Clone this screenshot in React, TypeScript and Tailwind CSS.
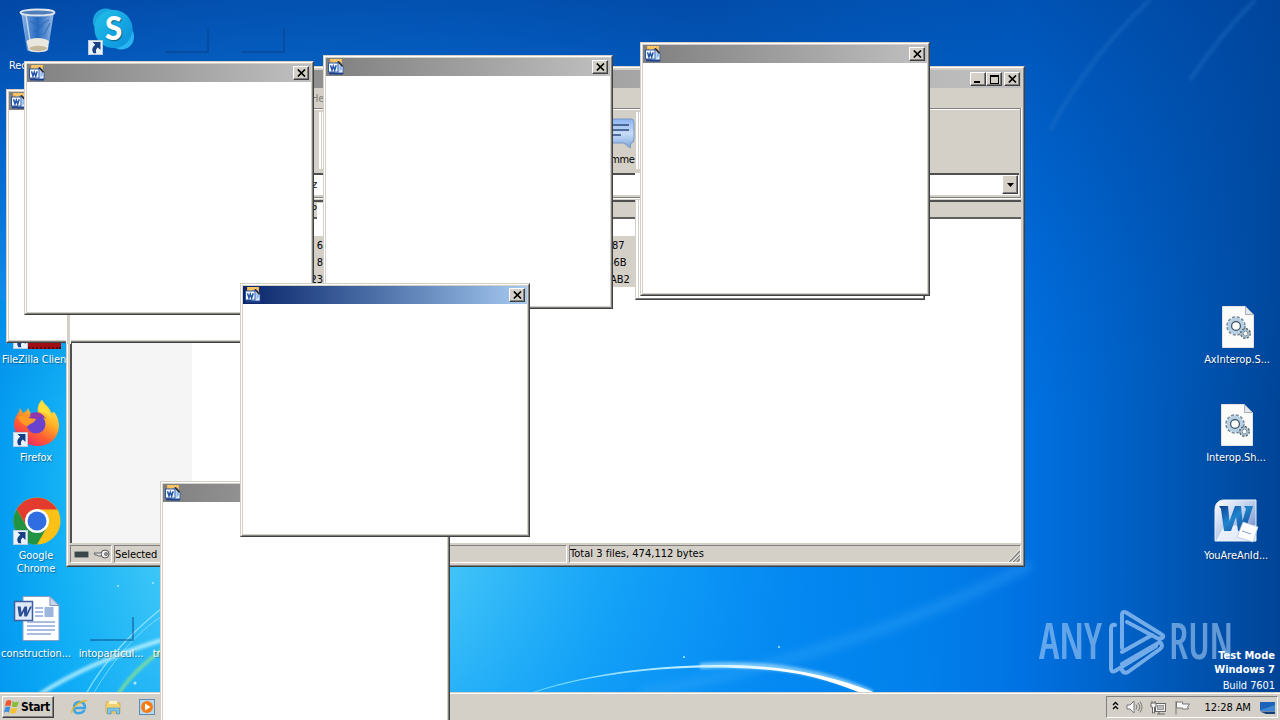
import React from 'react'

/* ── Data ─────────────────────────────────────────────────────── */
const POPUPS = [
  { id: 'left-back', x: 6, y: 89, active: false },
  { id: 'bottom', x: 160, y: 481, active: false },
  { id: 'left', x: 24, y: 61, active: false },
  { id: 'center', x: 323, y: 55, active: false },
  { id: 'right', x: 640, y: 42, active: false },
  { id: 'active', x: 240, y: 283, active: true },
]

const ARCHIVE_ROWS = [
  { size: '6', crc: '87', pad: 'pl-[2px]' },
  { size: '8', crc: '-6B', pad: 'pl-0' },
  { size: '23', crc: 'AB2', pad: 'pl-0' },
]

const RAISED = 'bg-[#d4d0c8] border border-t-white border-l-white border-r-[#404040] border-b-[#404040] shadow-[inset_-1px_-1px_0_#808080]'
const SUNKEN = 'border border-t-[#808080] border-l-[#808080] border-r-white border-b-white'

/* ── Icons ────────────────────────────────────────────────────── */
function WordTitleIcon() {
  return (
    <svg className="w-4 h-4 shrink-0" viewBox="0 0 16 16">
      <path d="M2 0h12v5H2z" fill="#f5b547" />
      <path d="M3 1h10M5 3h8" stroke="#fbe0a0" strokeDasharray="2 1" />
      <path d="M9 3h3l3 4v8H6v-4z" fill="#dcecff" stroke="#2b4f9c" strokeWidth=".7" />
      <path d="M10 2.500l4.500 5" stroke="#222" strokeWidth="1.500" />
      <path d="M11.500 6v6.500l3-3.300z" fill="#8ab8ec" />
      <rect x=".5" y="4" width="9.500" height="9" fill="#fff" stroke="#2456a8" />
      <path d="M2.500 6.200L4 11l1.300-4L6.700 11l1.500-4.800" fill="none" stroke="#2456a8" strokeWidth="1.500" />
      <path d="M1 14.500h14" stroke="#1c418a" strokeWidth="1.800" />
    </svg>
  )
}

function ShortcutArrow() {
  return (
    <svg className="absolute left-0 bottom-0 w-[15px] h-[15px]" viewBox="0 0 15 15">
      <rect x=".5" y=".5" width="14" height="14" fill="#eaf3fc" stroke="#b9cbdd" />
      <path d="M4.500 2h8v8L9.800 7.500c-2 1.500-2.300 3.500-1.500 5.700H5.500C3.500 10.500 4 7.200 7.300 4.800z" fill="#173f86" />
    </svg>
  )
}

function RecycleBinIcon() {
  return (
    <svg width="40" height="48" viewBox="0 0 40 48">
      <defs>
        <linearGradient id="bin" x1="0" x2="1">
          <stop offset="0" stopColor="#b9d4f2" stopOpacity=".8" />
          <stop offset=".5" stopColor="#4c86d2" stopOpacity=".5" />
          <stop offset="1" stopColor="#c6dcf5" stopOpacity=".8" />
        </linearGradient>
      </defs>
      <path d="M3 5l6 38c1 3 19 3 21 0l6-38z" fill="url(#bin)" />
      <path d="M8.500 34c5-4 17-4 22.500 0l-1.500 9c-3 3-16 3-19 0z" fill="#e9e6de" />
      <path d="M11 41c5-3 14-3 18 0-1 4-16 4-18 0z" fill="#c4b79c" />
      <path d="M12 14l8 5 11-6M16 25l9-7M26 28l6-12" stroke="#2d66b5" strokeWidth="1.200" fill="none" opacity=".7" />
      <path d="M8 8l4 26" stroke="#e8f2fd" strokeWidth="1.500" opacity=".7" />
      <ellipse cx="19.500" cy="5.500" rx="17" ry="3" fill="#4f7fbb" stroke="#dfe6ec" strokeWidth="1.800" />
    </svg>
  )
}

function SkypeIcon() {
  return (
    <svg width="45" height="45" viewBox="0 0 45 45" className="ml-1 -mt-1">
      <defs>
        <linearGradient id="sky" x1="0" y1="0" x2="1" y2="1">
          <stop offset="0" stopColor="#22c0e8" />
          <stop offset="1" stopColor="#0a8fdc" />
        </linearGradient>
      </defs>
      <circle cx="14" cy="14" r="13" fill="#1ba5e0" />
      <circle cx="30" cy="30" r="13" fill="#29b5f2" />
      <circle cx="22" cy="22" r="19.500" fill="url(#sky)" />
      <text x="22" y="33" textAnchor="middle" fontFamily="Lato, sans-serif" fontWeight="900" fontSize="32" fill="#fff">S</text>
    </svg>
  )
}

function FirefoxIcon() {
  return (
    <svg width="48" height="48" viewBox="0 0 48 48">
      <defs>
        <linearGradient id="fox" x1=".85" y1="0" x2=".25" y2="1">
          <stop offset="0" stopColor="#fff44f" />
          <stop offset=".4" stopColor="#ffb027" />
          <stop offset=".7" stopColor="#ff5a35" />
          <stop offset="1" stopColor="#e8206a" />
        </linearGradient>
      </defs>
      <path d="M29 1c2 4 6 6 8 10 1 1 1 3 1 3l3-1c5 6 6 14 4 20-3 9-11 14-20 14C12 47 2 38 1 26c0-6 3-11 5-13l1-4 3 5c2-1 4-2 5-5l3 6c3-1 6-1 7-1-1-5 0-9 4-13z" fill="url(#fox)" />
      <path d="M29 1c2 6 9 10 9 19-3-7-8-6-12-7-1-5 0-9 3-12z" fill="#ffe03a" />
      <circle cx="23" cy="25" r="9.500" fill="#6a42cf" />
      <path d="M17 15c6-4 13-1 16 5-4-3-9-2-10 1l-5-1z" fill="#9038a8" />
      <path d="M5 18c4-3 9-2 11 1l7 1c-1 4-6 4-8 7-3 0-8-3-10-9z" fill="#ff9a24" />
    </svg>
  )
}

function ChromeIcon() {
  return (
    <svg width="48" height="48" viewBox="0 0 48 48">
      <circle cx="24" cy="24" r="23.500" fill="#fbc116" />
      <path d="M3.700 12.200L14 30l10-17.500h20.300A23.500 23.500 0 0 0 3.700 12.200z" fill="#e33b2e" />
      <path d="M3.700 12.200A23.500 23.500 0 0 0 24 47.500L34.200 29.800 13.800 29.800z" fill="#229342" />
      <circle cx="24" cy="24" r="12" fill="#fff" />
      <circle cx="24" cy="24" r="9.500" fill="#2f6de0" />
    </svg>
  )
}

function WordDocIcon() {
  return (
    <svg width="48" height="48" viewBox="0 0 48 48">
      <path d="M10 1.500h27l9 9v35H10z" fill="#fdfeff" stroke="#8a9fc4" />
      <path d="M37 1.500v9h9z" fill="#c9d5ea" stroke="#7f93b8" />
      <path d="M22 13h8M22 17h8M22 21h8M14 27h28M14 31h28M14 35h28M14 39h24" stroke="#8ea8d6" strokeWidth="1.300" />
      <rect x="31.500" y="12" width="9" height="10" fill="#9db6de" />
      <rect x="1.500" y="6.500" width="18" height="19" fill="#dfe9f8" stroke="#3f5f9f" strokeWidth="1.500" />
      <path d="M4.500 11.500h3.200l.8 6 3-6h2.500l.3 6 2.600-6h2L14 21.500h-2.700l-.4-5-2.500 5H6z" fill="#2d4f98" />
    </svg>
  )
}

function GearFileIcon() {
  return (
    <svg width="32" height="42" viewBox="0 0 32 42" className="mt-[3px] -ml-px">
      <path d="M.5.500h23l8 8v33H.500z" fill="#fbfbfa" stroke="#e2e2e2" />
      <path d="M23.500.500v8h8z" fill="#e3e6ea" stroke="#a9afb7" />
      <circle cx="14" cy="20" r="7" fill="none" stroke="#6f8798" strokeWidth="5.500" strokeDasharray="2.400 1.300" />
      <circle cx="14" cy="20" r="6.500" fill="none" stroke="#b7d0e4" strokeWidth="3.800" />
      <circle cx="14" cy="20" r="4.400" fill="none" stroke="#3f5363" strokeWidth="1.200" />
      <circle cx="23.500" cy="27.500" r="3.600" fill="none" stroke="#46545f" strokeWidth="3.600" strokeDasharray="1.700 1.100" />
      <circle cx="23.500" cy="27.500" r="3.300" fill="none" stroke="#a3bac9" strokeWidth="2" />
    </svg>
  )
}

function WordAppIcon() {
  return (
    <svg width="46" height="44" viewBox="0 0 46 44">
      <defs>
        <linearGradient id="wapp" x1="0" y1="0" x2="1" y2="1">
          <stop offset="0" stopColor="#fff" />
          <stop offset=".5" stopColor="#b9cbea" />
          <stop offset="1" stopColor="#4f76c2" />
        </linearGradient>
        <linearGradient id="wletter" x1="0" y1="0" x2="1" y2="1">
          <stop offset="0" stopColor="#0c3f94" />
          <stop offset=".45" stopColor="#1f84cc" />
          <stop offset="1" stopColor="#123f90" />
        </linearGradient>
      </defs>
      <path d="M10 1h32v41H1V11C1 5 4 1 10 1z" fill="url(#wapp)" stroke="#e9f0fb" />
      <path d="M2 42l8-15 32-1v16z" fill="#eef4fc" opacity=".9" />
      <path d="M5 7h9l1.500 15L21 7h6l1.500 15L32 10l-2-3h9l-8 25h-7l-2-14-5 14h-7L7 10z" fill="url(#wletter)" />
      <path d="M29 23l15 5-5 15-16-5z" fill="#fff" stroke="#b4c4de" strokeWidth=".8" />
      <path d="M28 32l9 3" stroke="#7fa0d4" />
    </svg>
  )
}

function CloseGlyph() {
  return (
    <svg width="9" height="8" viewBox="0 0 9 8">
      <path d="M.8.500L8 7.500M8 .500L.8 7.500" stroke="#000" strokeWidth="1.700" />
    </svg>
  )
}

function CaptionButton({ children }: { children: React.ReactNode }) {
  return <div className={`w-4 h-[14px] shrink-0 flex items-center justify-center ${RAISED}`}>{children}</div>
}

/* ── Popup window ─────────────────────────────────────────────── */
function Popup({ x, y, active }: { x: number; y: number; active: boolean }) {
  return (
    <div
      className="absolute w-[290px] h-[254px] bg-white border border-t-[#d4d0c8] border-l-[#d4d0c8] border-r-[#404040] border-b-[#404040]"
      style={{ left: x, top: y }}
    >
      <div className="h-full border border-t-white border-l-white border-r-[#808080] border-b-[#808080]">
        <div className="h-full border border-[#d4d0c8] flex flex-col">
          <div
            className={`h-[18px] shrink-0 flex items-center justify-between px-[2px] bg-linear-to-r ${
              active ? 'from-[#0a246a] to-[#a6caf0]' : 'from-[#808080] to-[#c0c0c0]'
            }`}
          >
            <WordTitleIcon />
            <CaptionButton><CloseGlyph /></CaptionButton>
          </div>
        </div>
      </div>
    </div>
  )
}

/* ── Archive manager window ───────────────────────────────────── */
function ArchiveWindow() {
  return (
    <div className="absolute left-[66px] top-[66px] w-[959px] h-[501px] bg-[#d4d0c8] border border-t-[#d4d0c8] border-l-[#d4d0c8] border-r-[#404040] border-b-[#404040]">
      <div className="h-full flex flex-col border border-t-white border-l-white border-r-[#808080] border-b-[#808080] px-[2px] pt-[2px]">
        {/* Title bar */}
        <div className="h-[18px] shrink-0 flex items-center justify-end pr-px bg-linear-to-r from-[#808080] to-[#c0c0c0]">
          <CaptionButton><span className="w-[6px] h-[2px] bg-black mt-[6px] -ml-[2px]" /></CaptionButton>
          <CaptionButton><span className="w-[9px] h-[9px] border border-t-2 border-black" /></CaptionButton>
          <div className="w-[2px]" />
          <CaptionButton><CloseGlyph /></CaptionButton>
        </div>

        {/* Menu */}
        <div className="h-5 shrink-0 pl-[241px] pt-1 text-[#808080]">Help</div>

        {/* Toolbar */}
        <div className="h-[64px] shrink-0 border-t border-r border-[#808080] shadow-[inset_0_1px_0_#fff,1px_0_0_#fff] pl-[530px] pt-2">
          <div className="w-[42px] flex flex-col items-center">
            <svg width="32" height="34" viewBox="0 0 32 34">
              <defs>
                <linearGradient id="bubble" x1="0" y1="0" x2="0" y2="1">
                  <stop offset="0" stopColor="#8db4ef" />
                  <stop offset=".5" stopColor="#c8dcf8" />
                  <stop offset="1" stopColor="#7ba6da" />
                </linearGradient>
              </defs>
              <path d="M4 2h22q3 0 3 3v17q0 4-3 4l-1 5-6-5H4q-3 0-3-4V5q0-3 3-3z" fill="url(#bubble)" stroke="#7796c4" />
              <path d="M5 8h19M5 13h19M5 18h11" stroke="#2c4a7c" strokeWidth="1.500" />
            </svg>
            <span className="mt-[2px] leading-[14px] tracking-[-0.3px]">Comment</span>
          </div>
        </div>

        {/* Address line */}
        <div className="h-[26px] shrink-0 border-b border-r border-[#808080] shadow-[0_1px_0_#fff,1px_0_0_#fff]">
          <div className="h-[22px] mt-[1px] mr-[1px] flex justify-between bg-white border-t-2 border-[#505050]">
            <span className="pl-[242px] leading-5">z</span>
            <div className={`w-4 h-[19px] mr-px flex items-center justify-center ${RAISED}`}>
              <svg width="7" height="4" viewBox="0 0 7 4"><path d="M0 0h7L3.500 4z" /></svg>
            </div>
          </div>
        </div>

        {/* File list */}
        <div className="h-[343px] mt-[2px] shrink-0 flex flex-col bg-white border-t-2 border-l-2 border-[#505050]">
          <div className="h-[17px] shrink-0 bg-[#d4d0c8] border-b-2 border-[#606060] pl-[239px] leading-[15px]">P</div>
          <div className="flex-1 flex">
            <div className="w-[120px] bg-[#f5f5f5]" />
            <div className="flex-1 pt-[17px]">
              {ARCHIVE_ROWS.map((row) => (
                <div key={row.crc} className="w-[443px] h-[17px] flex bg-[#d4d0c8] leading-[19px]">
                  <span className="w-[131px] text-right">{row.size}</span>
                  <span className={`ml-[287px] ${row.pad}`}>{row.crc}</span>
                </div>
              ))}
            </div>
          </div>
        </div>

        {/* Status bar */}
        <div className="h-[18px] mt-[2px] shrink-0 flex gap-[2px]">
          <div className={`w-[42px] flex items-center gap-1 pl-[3px] ${SUNKEN}`}>
            <svg width="15" height="7" viewBox="0 0 15 7">
              <rect x=".5" y=".500" width="14" height="6" rx="1" fill="#3b4648" stroke="#8d9493" />
            </svg>
            <svg width="17" height="10" viewBox="0 0 17 10">
              <circle cx="12" cy="5" r="4" fill="#eee" stroke="#555" />
              <circle cx="13" cy="5" r="1.500" fill="#aaa" stroke="#444" strokeWidth=".7" />
              <path d="M8 4H1l1 2h2l1 1h3" fill="#ddd" stroke="#666" />
            </svg>
          </div>
          <div className={`w-[453px] leading-[17px] ${SUNKEN}`}>Selected</div>
          <div className={`flex-1 flex justify-between items-end leading-4 tracking-[0.02px] ${SUNKEN}`}>
            <span>Total 3 files, 474,112 bytes</span>
            <svg width="12" height="12" viewBox="0 0 12 12">
              <path d="M1 12L12 1M5 12l7-7M9 12l3-3" stroke="#808080" strokeWidth="1.500" />
              <path d="M0 12L11 0M4 12l8-8" stroke="#fff" strokeWidth=".7" />
            </svg>
          </div>
        </div>
      </div>
    </div>
  )
}

/* ── Desktop ──────────────────────────────────────────────────── */
function Wallpaper() {
  return (
    <svg className="absolute inset-0" width="1280" height="720" viewBox="0 0 1280 720">
      <defs>
        <linearGradient id="base" x1="0" y1="0" x2="0" y2="1">
          <stop offset="0" stopColor="#0846a8" />
          <stop offset=".25" stopColor="#0664cc" />
          <stop offset=".55" stopColor="#0598ec" />
          <stop offset="1" stopColor="#0597f2" />
        </linearGradient>
        <radialGradient id="glow" gradientUnits="userSpaceOnUse" cx="320" cy="500" r="620">
          <stop offset="0" stopColor="#a0f2fa" />
          <stop offset=".22" stopColor="#54d6f9" />
          <stop offset=".5" stopColor="#1caefa" stopOpacity=".9" />
          <stop offset=".8" stopColor="#0a84f4" stopOpacity=".5" />
          <stop offset="1" stopColor="#0078ec" stopOpacity="0" />
        </radialGradient>
        <linearGradient id="side" x1="0" x2="1">
          <stop offset="0" stopColor="#0078ea" stopOpacity="0" />
          <stop offset=".55" stopColor="#0088f5" stopOpacity=".3" />
          <stop offset=".8" stopColor="#0070e2" stopOpacity=".95" />
          <stop offset="1" stopColor="#004496" />
        </linearGradient>
        <linearGradient id="top" x1="0" y1="0" x2="0" y2="1">
          <stop offset="0" stopColor="#00459f" stopOpacity=".65" />
          <stop offset=".5" stopColor="#004fae" stopOpacity=".3" />
          <stop offset="1" stopColor="#0060cc" stopOpacity="0" />
        </linearGradient>
        <linearGradient id="leftEdge" x1="0" x2="1">
          <stop offset="0" stopColor="#0098f0" stopOpacity=".8" />
          <stop offset=".4" stopColor="#00b0f2" stopOpacity=".45" />
          <stop offset="1" stopColor="#20ccf0" stopOpacity=".1" />
        </linearGradient>
        <linearGradient id="arc" x1="0" x2="1">
          <stop offset="0" stopColor="#6cd4ff" />
          <stop offset=".5" stopColor="#c8f0ff" />
          <stop offset=".75" stopColor="#fff" />
        </linearGradient>
        <filter id="soft" x="-20%" y="-50%" width="140%" height="200%"><feGaussianBlur stdDeviation="1.500" /></filter>
        <filter id="haze" x="-20%" y="-50%" width="140%" height="200%"><feGaussianBlur stdDeviation="5" /></filter>
      </defs>
      <rect width="1280" height="720" fill="url(#base)" />
      <rect width="1280" height="720" fill="url(#glow)" />
      <rect y="300" width="170" height="420" fill="url(#leftEdge)" />
      <rect width="1280" height="720" fill="url(#side)" />
      <rect width="1280" height="420" fill="url(#top)" />
      {/* light streaks */}
      <path d="M1050 130Q1090 55 1150 0M1190 80Q1220 35 1255 0" fill="none" stroke="#2b78c8" strokeWidth="5" opacity=".3" filter="url(#soft)" />
      <path d="M640 694Q850 655 1030 565" fill="none" stroke="#4ab4ff" strokeWidth="10" opacity=".3" filter="url(#haze)" />
      <path d="M700 666C760 662 820 670 872 693" fill="none" stroke="#bfeaff" strokeWidth="6" opacity=".6" filter="url(#soft)" />
      <path d="M533 692C600 669 680 664 735 665 790 667 830 675 876 693L861 693C820 676 785 669 735 668 680 666 600 671 533 693z" fill="url(#arc)" />
      <path d="M40 694Q90 662 162 640" fill="none" stroke="#c9f6ff" strokeWidth="4" opacity=".8" filter="url(#soft)" />
      <path d="M86 694Q110 650 162 608" fill="none" stroke="#a5ecff" strokeWidth="1.500" opacity=".7" />
      <path d="M93 694Q125 640 162 616" fill="none" stroke="#a5ecff" strokeWidth="1" opacity=".6" />
      <path d="M118 694Q134 670 162 650" fill="none" stroke="#a6f070" strokeWidth="2.500" opacity=".9" filter="url(#soft)" />
      <g fill="#aeeaff">
        <circle cx="118" cy="586" r="1" /><circle cx="135" cy="683" r="1.500" />
        <circle cx="684" cy="657" r="1" /><circle cx="779" cy="647" r="1" /><circle cx="153" cy="583" r="1" />
      </g>
    </svg>
  )
}

function DesktopIcon({ x, y, label, shortcut, children }: {
  x: number; y: number; label: string; shortcut?: boolean; children?: React.ReactNode
}) {
  return (
    <div className="absolute w-[76px] flex flex-col items-center text-white [text-shadow:1px_1px_1px_#0006]" style={{ left: x, top: y }}>
      <div className="relative left-px w-[48px] h-[48px] flex items-center justify-center">
        {children}
        {shortcut && <ShortcutArrow />}
      </div>
      <span className="mt-1 text-center leading-[13px] whitespace-pre">{label}</span>
    </div>
  )
}

function EmptyFile() {
  return <div className="w-[44px] h-[24px] mt-[20px] border-r-2 border-b-2 border-[#0a3d8070]" />
}

function Watermark() {
  return (
    <div className="absolute left-[1036px] top-[596px]">
      <svg width="210" height="90" viewBox="0 -10 210 90" fill="none">
        <g fill="#b5d6fa" opacity=".55" fontFamily="'Open Sans', sans-serif" fontWeight="600" fontSize="51">
          <text x="3" y="53" textLength="63" lengthAdjust="spacingAndGlyphs">ANY</text>
          <text x="133" y="53" textLength="64" lengthAdjust="spacingAndGlyphs">RUN</text>
        </g>
        <g stroke="#9ac6f6" strokeWidth="4" strokeLinejoin="round" strokeLinecap="round" opacity=".75">
          <path d="M79 19q-4-1-4 4v39q0 5 4 3l41-25" />
          <path d="M86 42V9q0-5 5-2l34 21q4 2 1 4l-3 1-32-17" />
          <path d="M86 46l30-17M86 58l38-22q4 4 0 7L92 66q-4 2-6-2" />
        </g>
      </svg>
    </div>
  )
}

function Taskbar() {
  return (
    <div className="relative h-[28px] shrink-0 flex items-center justify-between bg-[#d4d0c8] border-t border-[#d4d0c8] shadow-[inset_0_1px_0_#fff] pl-[2px] pr-[2px] pt-[1px]">
      <div className="flex items-center">
        <div className={`w-[52px] h-[22px] flex items-center gap-px pl-px font-bold text-[12px] tracking-[-0.4px] ${RAISED}`}>
          <svg width="16" height="16" viewBox="0 0 15 15" className="shrink-0">
            <path d="M2 2q3-2 5 0L6 7Q4 5 1 7z" fill="#f0562d" />
            <path d="M8 2q3 2 6 0l-1.500 5q-3 1-5 0z" fill="#86bd38" />
            <path d="M1 8q3-2 5 0l-1.500 5Q3 11 0 13z" fill="#3f8fe0" />
            <path d="M7 8q3 2 5.500 0L11 13q-3 1.500-5.500 0z" fill="#f7c02e" />
          </svg>
          Start
        </div>
        <div className="flex items-center gap-[17px] ml-[17px]">
          <svg width="17" height="16" viewBox="0 0 17 16">
            <path d="M3 9h11q0-6-5.500-6T3 9t5.500 5q3.500 0 5-3" fill="none" stroke="#3da4e4" strokeWidth="2.500" />
            <path d="M1 14Q0 11 5 6.500T16 1.500" fill="none" stroke="#e5b62c" strokeWidth="1.400" />
          </svg>
          <svg width="17" height="16" viewBox="0 0 17 16">
            <path d="M1 3h5l1 1h8v10H1z" fill="#f3d371" stroke="#d3a940" strokeWidth=".8" />
            <path d="M4 2h8v3H4z" fill="#fff4c4" />
            <path d="M2.500 15V9h12v6h-3v-3H6v3z" fill="#7cc4ea" stroke="#438fbd" strokeWidth=".6" />
          </svg>
          <svg width="16" height="16" viewBox="0 0 16 16">
            <rect x=".500" y=".500" width="15" height="15" fill="#bcd8ef" stroke="#5b8cb9" />
            <circle cx="8" cy="8" r="6" fill="#f47c16" />
            <path d="M6 4.500l5.500 3.500L6 11.500z" fill="#fff" />
          </svg>
        </div>
      </div>

      {/* Tray */}
      <div className={`w-[172px] h-[22px] flex items-center justify-between pl-[5px] pr-[2px] ${SUNKEN}`}>
        <svg width="7" height="9" viewBox="0 0 7 9" className="-mt-1">
          <path d="M1 4l2.500-2.500L6 4M1 8l2.500-2.500L6 8" fill="none" stroke="#000" strokeWidth="1.300" />
        </svg>
        <svg width="17" height="14" viewBox="0 0 17 14" fill="none" stroke="#777">
          <path d="M1 5h3l4-4v12L4 9H1z" fill="#fff" />
          <path d="M10 4.500q2 2.500 0 5M12 3q3.500 4 0 8M14 1.500q4 5.500 0 11" />
        </svg>
        <svg width="17" height="15" viewBox="0 0 17 15" fill="#f5f5f5" stroke="#666">
          <rect x="5.500" y="3.500" width="10" height="8" />
          <rect x="7.500" y="5.500" width="6" height="4" fill="#bbb" stroke="#999" />
          <path d="M1 3h5v4H4.500v6h-2V7H1zM2 1v2M5 1v2M7 14h8M9 12v2" />
        </svg>
        <svg width="17" height="15" viewBox="0 0 17 15" fill="#f8f8f8" stroke="#777">
          <path d="M2.500 2h6v2h7l-2 3 1 2h-6V8h-6zM2 1v13.500" />
        </svg>
        <span className="ml-[6px] whitespace-nowrap">12:28 AM</span>
        <svg width="15" height="13" viewBox="0 0 15 13" className="ml-[2px]">
          <rect width="15" height="9" y="1" fill="#1c62b8" />
          <path d="M0 9l15-5v6H0z" fill="#3f86d2" />
          <path d="M0 10.500h15V13H6z" fill="#123e78" />
        </svg>
      </div>
    </div>
  )
}

export default function App() {
  return (
    <div className="relative w-[1280px] h-[720px] overflow-hidden flex flex-col bg-[#0078e0] text-black text-[11px] leading-[13px] tracking-[-0.08px] font-['DejaVu_Sans_Condensed','DejaVu_Sans',sans-serif] [font-stretch:condensed]">
      <Wallpaper />

      <div className="relative flex-1">
        <DesktopIcon x={-1} y={7} label="Recycle Bin"><RecycleBinIcon /></DesktopIcon>
        <DesktopIcon x={73} y={7} label="Skype" shortcut><SkypeIcon /></DesktopIcon>
        <DesktopIcon x={148} y={7} label="boatlike"><EmptyFile /></DesktopIcon>
        <DesktopIcon x={224} y={7} label="plan"><EmptyFile /></DesktopIcon>
        <DesktopIcon x={-2} y={301} label="FileZilla Client" shortcut>
          <div className="w-full h-full bg-[#a00d12] border-b-2 border-dotted border-[#5c0508]" />
        </DesktopIcon>
        <DesktopIcon x={-2} y={399} label="Firefox" shortcut><FirefoxIcon /></DesktopIcon>
        <DesktopIcon x={-2} y={497} label={'Google\nChrome'} shortcut><ChromeIcon /></DesktopIcon>
        <DesktopIcon x={-2} y={595} label="construction..."><WordDocIcon /></DesktopIcon>
        <DesktopIcon x={73} y={595} label="intoparticul..."><EmptyFile /></DesktopIcon>
        <DesktopIcon x={148} y={595} label="transportati..." />
        <DesktopIcon x={1199} y={301} label="AxInterop.S..."><GearFileIcon /></DesktopIcon>
        <DesktopIcon x={1198} y={399} label="Interop.Sh..."><GearFileIcon /></DesktopIcon>
        <DesktopIcon x={1198} y={497} label="YouAreAnId..."><WordAppIcon /></DesktopIcon>

        <Watermark />
        <div className="absolute right-[5px] top-[648px] text-right text-white">
          <div className="font-bold leading-[15px] tracking-[0.02px]">Test Mode</div>
          <div className="font-bold leading-[13px] tracking-[0.02px]">Windows 7</div>
          <div className="leading-[19px]">Build 7601</div>
        </div>
      </div>

      <Taskbar />

      {/* Windows, back to front */}
      <ArchiveWindow />
      {/* unpainted leftovers between the popups */}
      <div className="absolute left-[318px] top-[112px] w-[6px] h-[57px] bg-white border-l border-[#d4d0c8] shadow-[inset_2px_0_0_#fff,inset_3px_0_0_#d4d0c8]" />
      <div className="absolute left-[317px] top-[203px] w-[7px] h-[33px] bg-white" />
      <div className="absolute left-[635px] top-[112px] w-[6px] h-[57px] bg-white border-l border-[#d4d0c8] shadow-[inset_2px_0_0_#fff,inset_3px_0_0_#d4d0c8]" />
      <div className="absolute left-[635px] top-[173px] w-[6px] h-[21px] bg-white" />
      <div className="absolute left-[635px] top-[200px] w-[290px] h-[100px] bg-white border border-t-0 border-l-[#d4d0c8] border-r-[#404040] border-b-[#404040] shadow-[inset_-1px_-1px_0_#808080,inset_2px_0_0_#fff,inset_3px_0_0_#d4d0c8]" />
      {POPUPS.map((p) => <Popup key={p.id} x={p.x} y={p.y} active={p.active} />)}
      <div className="absolute left-[66px] top-[315px] w-[5px] h-[29px] bg-[#d4d0c8] border-x border-white" />
    </div>
  )
}
